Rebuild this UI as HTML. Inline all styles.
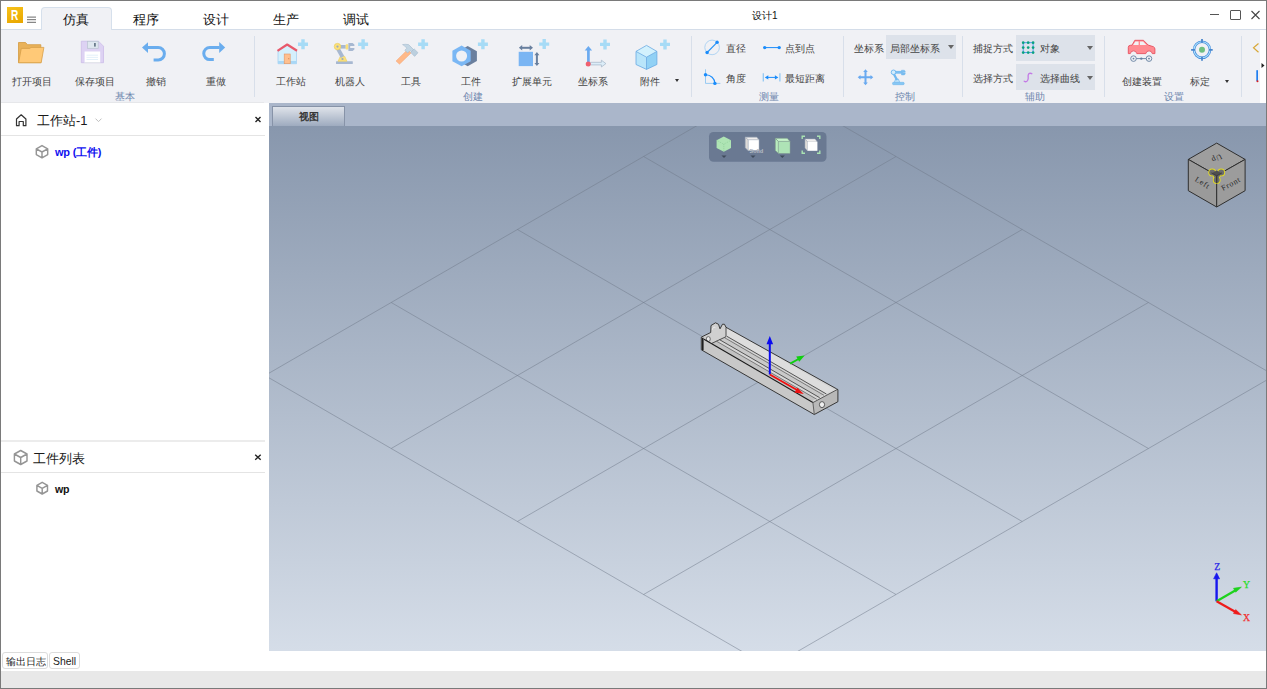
<!DOCTYPE html>
<html><head><meta charset="utf-8">
<style>
*{box-sizing:border-box;margin:0;padding:0}
html,body{width:1267px;height:689px;overflow:hidden;background:#fff;font-family:"Liberation Sans",sans-serif;color:#222}
.a{position:absolute}
.t{position:absolute;white-space:nowrap;line-height:1}
#frame{position:absolute;left:0;top:0;width:1267px;height:689px;border:1px solid #7a7a7a;pointer-events:none;z-index:50}
.tab{position:absolute;top:14px;font-size:12.6px;color:#111}
.lbl{position:absolute;top:77px;font-size:10px;color:#444;line-height:1}
.grp{position:absolute;top:92px;font-size:10px;color:#6e86ad;line-height:1}
.sep{position:absolute;top:36px;width:1px;height:61px;background:#d8dfea}
.s10{font-size:10px;color:#333}
.combo{position:absolute;background:#dde2ea}
.dd{position:absolute;width:0;height:0;border-left:3px solid transparent;border-right:3px solid transparent;border-top:3px solid #555}
</style></head><body>
<div id="frame"></div>

<!-- title bar -->
<div class="a" style="left:7px;top:7px;width:16px;height:16px;background:linear-gradient(160deg,#f7c21a,#e8a600)"></div>
<div class="t" style="left:11px;top:8px;font-size:14px;font-weight:bold;color:#fff;transform:scaleX(0.72);transform-origin:0 0">R</div>
<svg class="a" style="left:27px;top:14px" width="10" height="10" viewBox="0 0 10 10"><path d="M0 3.1H9M0 5.7H9M0 8.3H9" stroke="#6a6a6a" stroke-width="1"/></svg>

<div class="a" style="left:0;top:29px;width:1267px;height:1px;background:#d4dde9"></div>
<div class="a" style="left:41px;top:7px;width:71px;height:24px;background:#f0f1f5;border:1px solid #d6e0ec;border-bottom:none;border-radius:4px 4px 0 0"></div>
<div class="t tab" style="left:63px">仿真</div>
<div class="t tab" style="left:133px">程序</div>
<div class="t tab" style="left:203px">设计</div>
<div class="t tab" style="left:273px">生产</div>
<div class="t tab" style="left:343px">调试</div>
<div class="t" style="left:752px;top:11px;font-size:10px;color:#111">设计1</div>

<!-- window controls -->
<div class="a" style="left:1210px;top:14px;width:9px;height:1px;background:#555"></div>
<div class="a" style="left:1230px;top:10px;width:11px;height:10px;border:1px solid #555;border-radius:1px"></div>
<svg class="a" style="left:1251px;top:10px" width="9" height="10" viewBox="0 0 9 10"><path d="M0.5 1 L8.5 9 M8.5 1 L0.5 9" stroke="#444" stroke-width="1.1"/></svg>

<!-- ribbon -->
<div class="a" id="ribbon" style="left:1px;top:30px;width:1259px;height:73px;background:#f0f1f5"></div>
<div class="a" style="left:1px;top:102px;width:263px;height:1px;background:#e6e7ea"></div>

<!-- RIBBON CONTENT -->
<svg class="a" style="left:0;top:0;z-index:5" width="1267" height="689" viewBox="0 0 1267 689">
<!-- folder -->
<path d="M18.5 42.5 h7 l2 2.2 h13.3 v18 h-22.3z" fill="#e9b25a" stroke="#d39a40" stroke-width="0.8"/>
<path d="M21.3 48.4 h8.5 l1.2 -1 h12.9 l-2.7 15.3 h-22.6z" fill="#ffc977" stroke="#d7a04a" stroke-width="0.8"/>
<!-- floppy -->
<path d="M81.3 41.2 h17.2 l5 5 v16.5 h-22.2z" fill="#ddd2f3" stroke="#c9b8e6" stroke-width="0.7"/>
<rect x="87.6" y="41.3" width="10.6" height="7" fill="#dfe7ef" stroke="#b9c3cf" stroke-width="0.7"/>
<rect x="94" y="43" width="1.8" height="3.6" fill="#6b7b8c"/>
<rect x="84.6" y="51.5" width="15.6" height="11.2" fill="#fff"/>
<path d="M86.5 55.2h11.5M86.5 57.4h11.5M86.5 59.5h11.5" stroke="#dcecf8" stroke-width="0.8"/>
<rect x="84.6" y="62" width="15.6" height="0.8" fill="#dfe3e8"/>
<!-- undo -->
<path d="M147.5 47.5 H158.2 A6.2 6.2 0 0 1 158.2 59.9 H153.6" fill="none" stroke="#6aadee" stroke-width="3"/>
<path d="M142 47.6 L148 42.2 V53z" fill="#6aadee"/>
<!-- redo -->
<path d="M219.6 47.5 H209.8 A6.05 6.05 0 0 0 209.8 59.6 H213.8" fill="none" stroke="#6aadee" stroke-width="3"/>
<path d="M225.2 47.5 L219.2 42.1 V52.9z" fill="#6aadee"/>
<!-- house -->
<path d="M278 50.5 L287.2 44.8 L296.5 50.5 V63.7 H278z" fill="#d5f0fc" stroke="#9fcdf0" stroke-width="0.7"/>
<rect x="278" y="61" width="18.5" height="2.7" fill="#a9d7f6"/>
<path d="M277.5 50.8 L287.2 44.5 L297 50.8" fill="none" stroke="#e8596b" stroke-width="2.2" stroke-linejoin="round"/>
<rect x="284.2" y="54" width="6" height="9.7" fill="#ffc08f" stroke="#e39563" stroke-width="0.6"/>
<rect x="288.3" y="58.3" width="0.9" height="0.9" fill="#c07040"/>
<path d="M301.3 39.2h3.4v3.3h3.3v3.4h-3.3v3.3h-3.4v-3.3h-3.3v-3.4h3.3z" fill="#a6dbf6"/>
<!-- robot -->
<rect x="336" y="61.3" width="16.8" height="2.6" rx="0.5" fill="#a7b8d1"/>
<path d="M338 61.3 L340.3 56.3 H344.7 L347 61.3z" fill="#fbe07a" stroke="#e8c850" stroke-width="0.5"/>
<circle cx="342.5" cy="59" r="1.1" fill="#9aaac0"/>
<path d="M337.8 48.5 L342.5 57" stroke="#a7b8d1" stroke-width="3.8"/>
<rect x="340.5" y="45" width="5.3" height="3.6" fill="#a7b8d1"/>
<circle cx="337.5" cy="46.6" r="3.3" fill="#fbe07a" stroke="#e8c850" stroke-width="0.5"/>
<circle cx="337.5" cy="46.6" r="1.1" fill="#9aaac0"/>
<rect x="345.6" y="44.2" width="2.8" height="5.3" rx="0.8" fill="#fbe07a"/>
<path d="M348.4 43 h4.2 l1.8 1.6 v1.5 h-4.2 v1.8 h4.2 v1.5 l-1.8 1.6 h-4.2z" fill="#a7b8d1"/>
<path d="M361.40000000000003 39.2h3.4v3.3h3.3v3.4h-3.3v3.3h-3.4v-3.3h-3.3v-3.4h3.3z" fill="#a6dbf6"/>
<!-- hammer -->
<path d="M396 61 L407.6 49.6 L411.1 52.9 L399.5 64.2z" fill="#ffb989" stroke="#f0a070" stroke-width="0.4"/>
<path d="M402.5 44.6 Q405.5 43.9 408.6 44.6 L413.6 49.6 L411.6 51.6 L410 50.6 L407.6 53 L404.8 50.2 L406.8 48.2 Q405 45.8 402.5 44.6z" fill="#c3d6e4" stroke="#9fb5c8" stroke-width="0.5"/><path d="M412.3 50.6 L414.2 48.9 L418 52.7 L414.6 56.4 L410.8 52.6z" fill="#bcd0df" stroke="#9fb5c8" stroke-width="0.5"/>
<path d="M421.40000000000003 39.2h3.4v3.3h3.3v3.4h-3.3v3.3h-3.4v-3.3h-3.3v-3.4h3.3z" fill="#a6dbf6"/>
<!-- hex nut -->
<path d="M467.7 46.1 L476.9 51.3 V61 L467.7 66.2 L458.5 61 V51.3z" fill="#6a7f9e"/>
<path d="M461.6 45.6 L470.7 50.8 V61.2 L461.6 66.3 L452.4 61.2 V50.8z" fill="#7ab7f4"/>
<circle cx="461.6" cy="56" r="5.5" fill="#f0f1f5"/>
<path d="M481.2 39.2h3.4v3.3h3.3v3.4h-3.3v3.3h-3.4v-3.3h-3.3v-3.4h3.3z" fill="#a6dbf6"/>
<!-- expand unit -->
<path d="M521.5 47.8 H530.5" stroke="#687f9e" stroke-width="2"/>
<path d="M518.9 47.8 L522.2 45.1 V50.5z M533 47.8 L529.7 45.1 V50.5z" fill="#687f9e"/>
<rect x="518.7" y="51.8" width="14.3" height="14.3" fill="#7ab5f3"/>
<path d="M536.9 54.8 V63.3" stroke="#687f9e" stroke-width="2"/>
<path d="M536.9 52 L534.4 55.2 H539.4z M536.9 66.1 L534.4 62.9 H539.4z" fill="#687f9e"/>
<path d="M542.5 39.1h3.4v3.3h3.3v3.4h-3.3v3.3h-3.4v-3.3h-3.3v-3.4h3.3z" fill="#a6dbf6"/>
<!-- coordinate system -->
<path d="M588.4 50 V63.5" stroke="#6aaaf0" stroke-width="2.7"/>
<path d="M588.4 45.9 L584.7 50.6 H592.1z" fill="#6aaaf0"/>
<path d="M590.5 62.3 H601.4 V60.2 L605.9 63.6 L601.4 67 V64.9 H590.5z" fill="#dcedf8" stroke="#a3b5c6" stroke-width="0.7"/>
<circle cx="588.2" cy="63.9" r="2.5" fill="#f0606f"/>
<path d="M603.3 39.4h3.4v3.3h3.3v3.4h-3.3v3.3h-3.4v-3.3h-3.3v-3.4h3.3z" fill="#a6dbf6"/>
<!-- cube -->
<path d="M646.5 45.4 L656.9 51.4 L646.5 57.2 L636 51.4z" fill="#d2f1fd"/>
<path d="M636 51.4 L646.5 57.2 V69.4 L636 64.5z" fill="#b9e5fa"/>
<path d="M656.9 51.4 L646.5 57.2 V69.4 L656.9 64.5z" fill="#91d1f5"/>
<path d="M646.5 45.4 L656.9 51.4 V64.5 L646.5 69.4 L636 64.5 V51.4z M636 51.4 L646.5 57.2 L656.9 51.4 M646.5 57.2 V69.4" fill="none" stroke="#68a9e2" stroke-width="0.8" stroke-linejoin="round"/>
<path d="M663.3 39.4h3.4v3.3h3.3v3.4h-3.3v3.3h-3.4v-3.3h-3.3v-3.4h3.3z" fill="#a6dbf6"/>
<!-- diameter -->
<circle cx="712.1" cy="47.4" r="7.3" fill="none" stroke="#a9d0f2" stroke-width="0.9"/>
<path d="M707.1 52.5 L717.1 42.3" stroke="#2b95f6" stroke-width="1.2"/>
<circle cx="717.1" cy="42.3" r="1.7" fill="#1a8cfb"/><circle cx="707.1" cy="52.5" r="1.7" fill="#1a8cfb"/>
<!-- point to point -->
<path d="M764.7 47.6 H779.2" stroke="#1a8cfb" stroke-width="1"/>
<circle cx="764.7" cy="47.6" r="1.7" fill="#1a8cfb"/><circle cx="779.2" cy="47.6" r="1.7" fill="#1a8cfb"/>
<!-- angle -->
<path d="M705.5 69.3 V83.4 H720.4" fill="none" stroke="#8fc6f2" stroke-width="0.9"/>
<path d="M705.5 74.8 A9.2 8.6 0 0 1 714.9 83.4" fill="none" stroke="#1a8cfb" stroke-width="1.1"/>
<circle cx="705.5" cy="74.8" r="1.7" fill="#1a8cfb"/><circle cx="714.9" cy="83.4" r="1.7" fill="#1a8cfb"/>
<!-- shortest distance -->
<path d="M763.3 73.2 V81.5 M779.9 73.2 V81.5" stroke="#93c8f2" stroke-width="1.3"/>
<path d="M767 77.4 H776" stroke="#1a8cfb" stroke-width="1"/>
<path d="M764.8 77.4 L768.3 75.3 V79.5z M778.4 77.4 L774.9 75.3 V79.5z" fill="#1a8cfb"/>
<!-- move -->
<path d="M865.5 71 V83.5 M859.3 77.3 H871.7" stroke="#6aaaf0" stroke-width="2"/>
<path d="M865.5 69.2 L863.2 72 H867.8z M865.5 85.2 L863.2 82.4 H867.8z M857.7 77.3 L860.5 75 V79.6z M873.3 77.3 L870.5 75 V79.6z" fill="#6aaaf0"/>
<!-- robot control -->
<rect x="892.5" y="82.3" width="11.7" height="2.4" rx="1" fill="#86c7f4" stroke="#62b0ea" stroke-width="0.5"/>
<path d="M894.3 82.3 L895.6 79 H898.4 L899.7 82.3z" fill="#bfe3fa" stroke="#6ab4ee" stroke-width="0.6"/>
<path d="M893.6 73.5 L897 80" stroke="#72b9f0" stroke-width="2.3"/>
<rect x="895" y="70.9" width="6.8" height="2.8" fill="#7cbef1"/>
<circle cx="893.5" cy="72.3" r="2.3" fill="#d3ecfc" stroke="#6ab4ee" stroke-width="0.9"/>
<path d="M901.5 70.2 h2.8 l0.9 1 v1.1 h-2 v0.6 h2 v1.1 l-0.9 1 h-2.8z" fill="#7cbef1" stroke="#62b0ea" stroke-width="0.4"/>
<!-- grid icon -->
<rect x="1023.2" y="42.7" width="9.9" height="9.9" fill="none" stroke="#3d95f0" stroke-width="0.9"/>
<g fill="#09a27f">
<circle cx="1023.2" cy="42.7" r="1.35"/><circle cx="1028.2" cy="42.7" r="1.35"/><circle cx="1033.1" cy="42.7" r="1.35"/>
<circle cx="1023.2" cy="47.6" r="1.35"/><circle cx="1028.2" cy="47.6" r="1.35"/><circle cx="1033.1" cy="47.6" r="1.35"/>
<circle cx="1023.2" cy="52.6" r="1.35"/><circle cx="1028.2" cy="52.6" r="1.35"/><circle cx="1033.1" cy="52.6" r="1.35"/>
</g>
<!-- S curve -->
<path d="M1031.8 73.7 C1030 72.8 1028.6 73.3 1028.2 75.2 C1027.8 77.2 1029 78.5 1027.5 80.6 C1026.6 81.8 1025.2 81.9 1024.2 81.2" fill="none" stroke="#c47ae6" stroke-width="1.3" stroke-linecap="round"/>
<!-- car -->
<path d="M1128.3 53.6 V47.3 Q1128.3 45.4 1130.4 45.3 L1132 45.2 L1134.8 40.3 H1143.5 L1148.2 45.1 L1153.4 46.7 Q1154.9 47.4 1154.9 49 V53.6 H1152.3 A3.3 3.3 0 0 0 1145.8 53.6 H1136.8 A3.3 3.3 0 0 0 1130.3 53.6z" fill="#ff8a91" stroke="#e6505f" stroke-width="0.9" stroke-linejoin="round"/>
<path d="M1133.1 45.1 L1135.4 41.5 H1138.6 V45.1z M1140 41.5 H1143 L1146.4 45.1 H1140z" fill="#f2f3f6"/>
<g fill="none" stroke="#6480a0" stroke-width="0.9">
<circle cx="1133.5" cy="58.6" r="2.8"/><circle cx="1149" cy="58.6" r="2.8"/>
<path d="M1136.3 58.6 H1146.2"/>
</g>
<circle cx="1133.5" cy="58.6" r="0.9" fill="#6480a0"/><circle cx="1149" cy="58.6" r="0.9" fill="#6480a0"/><circle cx="1141.3" cy="58.6" r="1.2" fill="#6480a0"/>
<!-- target -->
<circle cx="1202" cy="49.8" r="8" fill="none" stroke="#4a8fde" stroke-width="2.6"/>
<circle cx="1202" cy="49.8" r="8" fill="none" stroke="#aee3fc" stroke-width="1.1"/>
<circle cx="1202" cy="49.8" r="3" fill="#6fbf82"/>
<path d="M1202 38.9 V42.8 M1202 56.8 V60.7 M1191.1 49.8 H1195 M1209 49.8 H1212.7" stroke="#4a86cc" stroke-width="1.8"/>
<!-- partial icon at right edge -->
<path d="M1258.5 43.5 L1253.5 47.8 L1258.5 52.2" fill="none" stroke="#d8a838" stroke-width="1.2"/>
<rect x="1256.3" y="70.2" width="1.7" height="11" fill="#1f7ef0"/>
<circle cx="1257.5" cy="81.3" r="1" fill="#e02020"/>
<path d="M1261.5 63 L1264.5 65.5 L1261.5 68z" fill="#222"/>
</svg>
<div id="rc">
<div class="t lbl" style="left:12px">打开项目</div>
<div class="t lbl" style="left:75px">保存项目</div>
<div class="t lbl" style="left:146px">撤销</div>
<div class="t lbl" style="left:206px">重做</div>
<div class="t grp" style="left:115px">基本</div>
<div class="sep" style="left:254px"></div>
<div class="t lbl" style="left:276px">工作站</div>
<div class="t lbl" style="left:335px">机器人</div>
<div class="t lbl" style="left:401px">工具</div>
<div class="t lbl" style="left:461px">工件</div>
<div class="t lbl" style="left:512px">扩展单元</div>
<div class="t lbl" style="left:578px">坐标系</div>
<div class="t lbl" style="left:640px">附件</div>
<div class="dd" style="left:675px;top:79px;border-width:3px 2.5px 0 2.5px;border-top-color:#333"></div>
<div class="t grp" style="left:463px">创建</div>
<div class="sep" style="left:691px"></div>
<div class="t lbl" style="left:726px;top:44px">直径</div>
<div class="t lbl" style="left:785px;top:44px">点到点</div>
<div class="t lbl" style="left:726px;top:74px">角度</div>
<div class="t lbl" style="left:785px;top:74px">最短距离</div>
<div class="t grp" style="left:759px">测量</div>
<div class="sep" style="left:843px"></div>
<div class="t lbl" style="left:854px;top:44px">坐标系</div>
<div class="combo" style="left:886px;top:35px;width:70px;height:24px"></div>
<div class="t lbl" style="left:890px;top:44px">局部坐标系</div>
<div class="dd" style="left:948px;top:45px;border-width:4px 3.5px 0 3.5px;border-top-color:#666"></div>
<div class="t grp" style="left:895px">控制</div>
<div class="sep" style="left:962px"></div>
<div class="t lbl" style="left:973px;top:44px">捕捉方式</div>
<div class="combo" style="left:1016px;top:35px;width:79px;height:26px"></div>
<div class="t lbl" style="left:1040px;top:44px">对象</div>
<div class="dd" style="left:1087px;top:46px;border-width:4px 3.5px 0 3.5px;border-top-color:#666"></div>
<div class="t lbl" style="left:973px;top:74px">选择方式</div>
<div class="combo" style="left:1016px;top:64px;width:79px;height:26px"></div>
<div class="t lbl" style="left:1040px;top:74px">选择曲线</div>
<div class="dd" style="left:1087px;top:76px;border-width:4px 3.5px 0 3.5px;border-top-color:#666"></div>
<div class="t grp" style="left:1025px">辅助</div>
<div class="sep" style="left:1104px"></div>
<div class="t lbl" style="left:1122px">创建装置</div>
<div class="t lbl" style="left:1190px">标定</div>
<div class="dd" style="left:1225px;top:80px;border-width:3px 2.5px 0 2.5px;border-top-color:#333"></div>
<div class="t grp" style="left:1164px">设置</div>
<div class="sep" style="left:1241px"></div>
</div>

<!-- left panel -->
<div id="lp">
<svg class="a" style="left:0;top:0;z-index:3" width="270" height="689" viewBox="0 0 270 689">
<path d="M16.5 125.7 V119 L21.2 114.8 L25.9 119 V125.7 H23.3 V121.5 H19.1 V125.7z" fill="none" stroke="#333" stroke-width="1.2" stroke-linejoin="round"/>
<path d="M95.5 118.6 L98.5 121.6 L101.5 118.6" fill="none" stroke="#b8b8b8" stroke-width="0.9"/>
<path d="M255.5 117 L260.5 122 M260.5 117 L255.5 122" stroke="#222" stroke-width="1.4"/>
<g fill="none" stroke="#959595" stroke-width="1.45" stroke-linejoin="round">
<path d="M42 145.6 L47.7 148.8 V154.6 L42 157.8 L36.3 154.6 V148.8z M36.3 148.8 L42 152 L47.7 148.8 M42 152 V157.8"/>
<path d="M20.7 450.5 L27 454 V461 L20.7 464.5 L14.4 461 V454z M14.4 454 L20.7 457.5 L27 454 M20.7 457.5 V464.5"/>
<path d="M42.2 482.3 L47.5 485.3 V491 L42.2 494 L36.9 491 V485.3z M36.9 485.3 L42.2 488.3 L47.5 485.3 M42.2 488.3 V494"/>
</g>
<path d="M255.2 454.8 L260.7 459.8 M260.7 454.8 L255.2 459.8" stroke="#222" stroke-width="1.4"/>
</svg>
<div class="a" style="left:1px;top:135px;width:264px;height:1px;background:#e4e4e4"></div>
<div class="a" style="left:1px;top:440px;width:264px;height:2px;background:#ececec"></div>
<div class="a" style="left:1px;top:472px;width:264px;height:1px;background:#e4e4e4"></div>
<div class="t" style="left:37px;top:114px;font-size:13px;color:#1a1a1a">工作站-1</div>
<div class="t" style="left:55px;top:147px;font-size:11px;font-weight:bold;color:#1010f0;letter-spacing:-0.2px">wp (工件)</div>
<div class="t" style="left:33px;top:452px;font-size:13px;color:#1a1a1a">工件列表</div>
<div class="t" style="left:55px;top:484px;font-size:10.6px;font-weight:bold;color:#111;letter-spacing:-0.3px">wp</div>
</div>

<!-- viewport -->
<div id="vp">
<div class="a" style="left:269px;top:103px;width:997px;height:23px;background:#aab6ca"></div>
<div class="a" style="left:272px;top:106px;width:73px;height:20px;border:1px solid #8793a8;border-bottom:none;background:linear-gradient(#dfe3ea,#9eabbf)"></div>
<div class="t" style="left:299px;top:112px;font-size:10px;font-weight:bold;color:#383838">视图</div>
<div class="a" style="left:269px;top:126px;width:997px;height:525px;background:linear-gradient(#8897ad,#d5dde8);overflow:hidden">
<svg class="a" style="left:-269px;top:-126px" width="1267" height="689" viewBox="0 0 1267 689">
<path d="M769.8 83.5 L1274.6 375.5 M643.6 156.5 L1148.4 448.5 M517.4 229.5 L1022.2 521.5 M391.2 302.5 L896.0 594.5 M265.0 375.5 L769.8 667.5 M769.8 83.5 L265.0 375.5 M896.0 156.5 L391.2 448.5 M1022.2 229.5 L517.4 521.5 M1148.4 302.5 L643.6 594.5 M1274.6 375.5 L769.8 667.5" stroke="#6f7a8a" stroke-opacity="0.5" stroke-width="1" fill="none"/>

<!-- floating toolbar -->
<rect x="709" y="132" width="117.5" height="29.7" rx="4.5" fill="#66768f" fill-opacity="0.9"/>
<g>
<path d="M723.8 136.4 L731 140.3 V148 L723.8 151.8 L716.6 148 V140.3z" fill="#aee4b4"/>
<path d="M716.6 140.3 L723.8 144.2 L731 140.3 M723.8 144.2 V151.8" fill="none" stroke="#8ccc96" stroke-width="0.7" stroke-dasharray="1 1"/>
<path d="M721.5 155.5 L726.5 155.5 L724 158z" fill="#3f4a5a"/>
<path d="M745.3 137.2 H756.8 L759 139.9 H748.2z" fill="#f1efee" stroke="#a9b3bf" stroke-width="0.6"/>
<path d="M745.3 137.2 L748.2 139.9 V150.5 L745.3 147.8z" fill="#dedbd8" stroke="#a9b3bf" stroke-width="0.6"/>
<rect x="748.2" y="139.9" width="10.8" height="10.6" fill="#fff" stroke="#a9b3bf" stroke-width="0.5"/>
<text x="749.5" y="152.8" font-family="Liberation Sans" font-size="5.6" font-weight="bold" fill="#cfd3d9" stroke="#6f7d92" stroke-width="0.2">Solid</text>
<path d="M750.5 155.5 L755.5 155.5 L753 158z" fill="#3f4a5a"/>
<path d="M775.3 138.3 H787.2 L790 141.4 H778.3z" fill="#c6f2ca" stroke="#7c9c8a" stroke-width="0.6"/>
<path d="M775.3 138.3 L778.3 141.4 V153.3 L775.3 150.4z" fill="#b9ecbf" stroke="#7c9c8a" stroke-width="0.6"/>
<rect x="778.3" y="141.4" width="11.7" height="11.9" fill="#aee3b6" stroke="#8aa898" stroke-width="0.5"/>
<path d="M779.8 155.5 L784.8 155.5 L782.3 158z" fill="#3f4a5a"/>
<path d="M802.2 139 V136.2 H805 M817 136.2 H819.8 V139 M819.8 150.5 V153.3 H817 M805 153.3 H802.2 V150.5" fill="none" stroke="#a9e3b2" stroke-width="1.4"/>
<path d="M805 139 H815 L817.4 142 H807.6z" fill="#f1efee" stroke="#a9b3bf" stroke-width="0.5"/>
<path d="M805 139 L807.6 142 V150.8 L805 148z" fill="#dedbd8" stroke="#a9b3bf" stroke-width="0.5"/>
<rect x="807.6" y="142" width="9.8" height="8.8" fill="#fff"/>
</g>
<!-- view cube -->
<g stroke="#2f2f2f" stroke-width="1" stroke-linejoin="round">
<path d="M1216.7 143.1 L1245.1 159.4 L1216.7 175.5 L1188.3 159.4z" fill="#9e9e9e"/>
<path d="M1188.3 159.4 L1216.7 175.5 V207 L1188.3 190.7z" fill="#9a9a9a"/>
<path d="M1245.1 159.4 L1216.7 175.5 V207 L1245.1 190.7z" fill="#9c9c9c"/>
</g>
<g fill="#e4dc22"><circle cx="1212.2" cy="172.4" r="3.9"/><circle cx="1221.2" cy="172.4" r="3.9"/><circle cx="1216.7" cy="180" r="3.9"/><path d="M1212.2 172.4 L1221.2 172.4 L1216.7 180z" stroke="#e4dc22" stroke-width="3" stroke-linejoin="round"/></g>
<g fill="#6c6c6c"><circle cx="1212.2" cy="172.4" r="3"/><circle cx="1221.2" cy="172.4" r="3"/><circle cx="1216.7" cy="180" r="3"/><path d="M1212.2 172.4 L1221.2 172.4 L1216.7 180z" stroke="#6c6c6c" stroke-width="1.2" stroke-linejoin="round"/></g>
<path d="M1216.7 170.5 L1222 173.5 L1216.7 176.3 L1211.4 173.5z" fill="#4e4e4e"/>
<path d="M1216.7 175.8 V183.5" stroke="#333" stroke-width="1.2"/>
<path d="M1211.5 172.8 L1216.7 175.8 L1221.9 172.8" fill="none" stroke="#3a3a3a" stroke-width="0.8"/>
<g font-family="Liberation Serif" font-size="8" fill="#2a2a2a" text-anchor="middle" dominant-baseline="central" letter-spacing="0.7">
<text transform="translate(1216.5 158.5) rotate(155)">Up</text>
<text transform="translate(1202.5 182.8) rotate(32)">Left</text>
<text transform="translate(1231 183.8) rotate(-28)">Front</text>
</g>
<!-- triad -->
<path d="M1216.6 601.3 V577.5" stroke="#1717ee" stroke-width="2.4"/>
<path d="M1216.6 572.8 L1219.6 578.8 H1213.6z" fill="#1717ee" stroke="#1717ee" stroke-width="0.6" stroke-linejoin="round"/>
<path d="M1216.6 601.3 L1236.5 589.8" stroke="#1ed21e" stroke-width="2.2"/>
<path d="M1241.4 587.1 L1233.5 588.3 L1235.7 592.2z" fill="#1ed21e" stroke="#1ed21e" stroke-width="0.6" stroke-linejoin="round"/>
<path d="M1216.6 601.3 L1236.5 612.5" stroke="#ee1b1b" stroke-width="2.2"/>
<path d="M1241.4 614.9 L1235.7 609.6 L1233.5 613.5z" fill="#ee1b1b" stroke="#ee1b1b" stroke-width="0.6" stroke-linejoin="round"/>
<g font-family="Liberation Serif" font-size="9.8" text-anchor="middle" stroke-width="0.25">
<text x="1217.2" y="570.2" fill="#2a2ae8" stroke="#2a2ae8">Z</text>
<text x="1246.6" y="587.6" fill="#28dd28" stroke="#28dd28">Y</text>
<text x="1246.6" y="621.2" fill="#f03030" stroke="#f03030">X</text>
</g>
<path d="M701.3 337.1 L710.7 332.5 L711 325.5 L715.5 322.8 L718.5 324.3 L720 328.8 L722.5 324.2 L724.5 324.3 L726 327.3 L836.5 388.8 L837.9 389.6 L837.9 401.7 L814.3 414.5 L701.3 349.8z" fill="#d4d4d4"/>
<path d="M726.0 327.1 L836.5 391.2 L826.4 394.0 L726.9 336.3z" fill="#dddddd"/>
<path d="M726.9 336.3 L826.4 394.0 L824.0 395.3 L724.3 337.5z" fill="#d3d3d3"/>
<path d="M724.3 337.5 L824.0 395.3 L819.7 397.7 L719.6 339.7z" fill="#c9c9c9"/>
<path d="M719.6 339.7 L819.7 397.7 L816.8 399.3 L716.5 341.2z" fill="#d6d6d6"/>
<path d="M716.5 341.2 L816.8 399.3 L812.0 402.0 L711.3 343.6z" fill="#c2c2c2"/>
<path d="M701.3 337.1 L812.9 402.6 L814.3 414.5 L701.3 349.8z" fill="#c8c8c8"/>
<path d="M812.9 402.6 L837.5 389.4 L837.9 401.7 L814.3 414.5z" fill="#b8b8b8"/>
<path d="M812.9 400.6 L835.8 388.3 L837.7 389.5 L813.6 402.4z" fill="#d8d8d8"/>
<ellipse cx="822" cy="404.6" rx="2.6" ry="3" fill="#efefef" stroke="#3a3a3a" stroke-width="0.8"/>
<path d="M701.3 337.1 L710.7 332.5 L711.5 343.5 L704 339.4z" fill="#cdcdcd"/>
<ellipse cx="708.3" cy="339" rx="2" ry="2.4" fill="#ececec" stroke="#444" stroke-width="0.7"/>
<path d="M710.7 332.5 L711 325.5 L715.5 322.8 L718.5 324.3 L720 328.8 L722.5 324.2 L724.5 324.3 L726 327.3 V336.7 L711.5 343.5z" fill="#d0d0d0"/>
<path d="M711.5 343.5 L726 336.7 V327.3" fill="none" stroke="#2e2e2e" stroke-width="0.8"/>
<path d="M712 330 C713 327 714.5 326.5 715.5 328" fill="none" stroke="#fff" stroke-width="0.8" stroke-opacity="0.7"/>
<path d="M726.9 336.3 L826.4 394.0" stroke="#333" stroke-width="0.8"/>
<path d="M724.3 337.5 L824.0 395.3" stroke="#555" stroke-width="0.7"/>
<path d="M719.6 339.7 L819.7 397.7" stroke="#333" stroke-width="0.8"/>
<path d="M716.5 341.2 L816.8 399.3" stroke="#555" stroke-width="0.7"/>
<path d="M704.0 339.3 L812.9 402.5" stroke="#1a1a1a" stroke-width="1.1"/>
<path d="M812.9 402.6 L837.5 389.4" stroke="#333" stroke-width="0.8"/>
<path d="M702.8 337.8 V350.2" stroke="#1e1e1e" stroke-width="1.6"/>
<path d="M701.3 337.1 L710.7 332.5 L711 325.5 L715.5 322.8 L718.5 324.3 L720 328.8 L722.5 324.2 L724.5 324.3 L726 327.3 L836.5 388.8 L837.9 389.6 L837.9 401.7 L814.3 414.5 L701.3 349.8z" fill="none" stroke="#262626" stroke-width="0.9" stroke-linejoin="round"/>
<path d="M812.9 402.6 L814.3 414.5" stroke="#555" stroke-width="0.9"/>
<path d="M769.8 374.5 V342" stroke="#0a0af0" stroke-width="2"/>
<path d="M769.8 335.9 L773.1 344.3 H766.5z" fill="#0a0af0"/>
<path d="M769.8 374.5 L797 390" stroke="#f01010" stroke-width="1.8"/>
<path d="M803.8 394.1 L794.5 392.6 L797.3 387.8z" fill="#f01010"/>
<path d="M790.2 363.6 L799 358.8" stroke="#10d010" stroke-width="1.8"/>
<path d="M804.7 355.5 L796.2 356.5 L799.2 361.8z" fill="#10d010"/>
</svg>
</div>
</div>

<!-- bottom -->
<div class="a" style="left:2px;top:652px;width:46px;height:17px;border:1px solid #dcdcdc;border-radius:3px;background:#fff"></div>
<div class="t" style="left:6px;top:657px;font-size:9.6px;color:#1a1a1a">输出日志</div>
<div class="a" style="left:49px;top:652px;width:31px;height:17px;border:1px solid #dcdcdc;border-radius:3px;background:#fff"></div>
<div class="t" style="left:53px;top:657px;font-size:10.4px;color:#222">Shell</div>

<div class="a" style="left:1px;top:671px;width:1265px;height:17px;background:#e8e8e8"></div>
</body></html>
